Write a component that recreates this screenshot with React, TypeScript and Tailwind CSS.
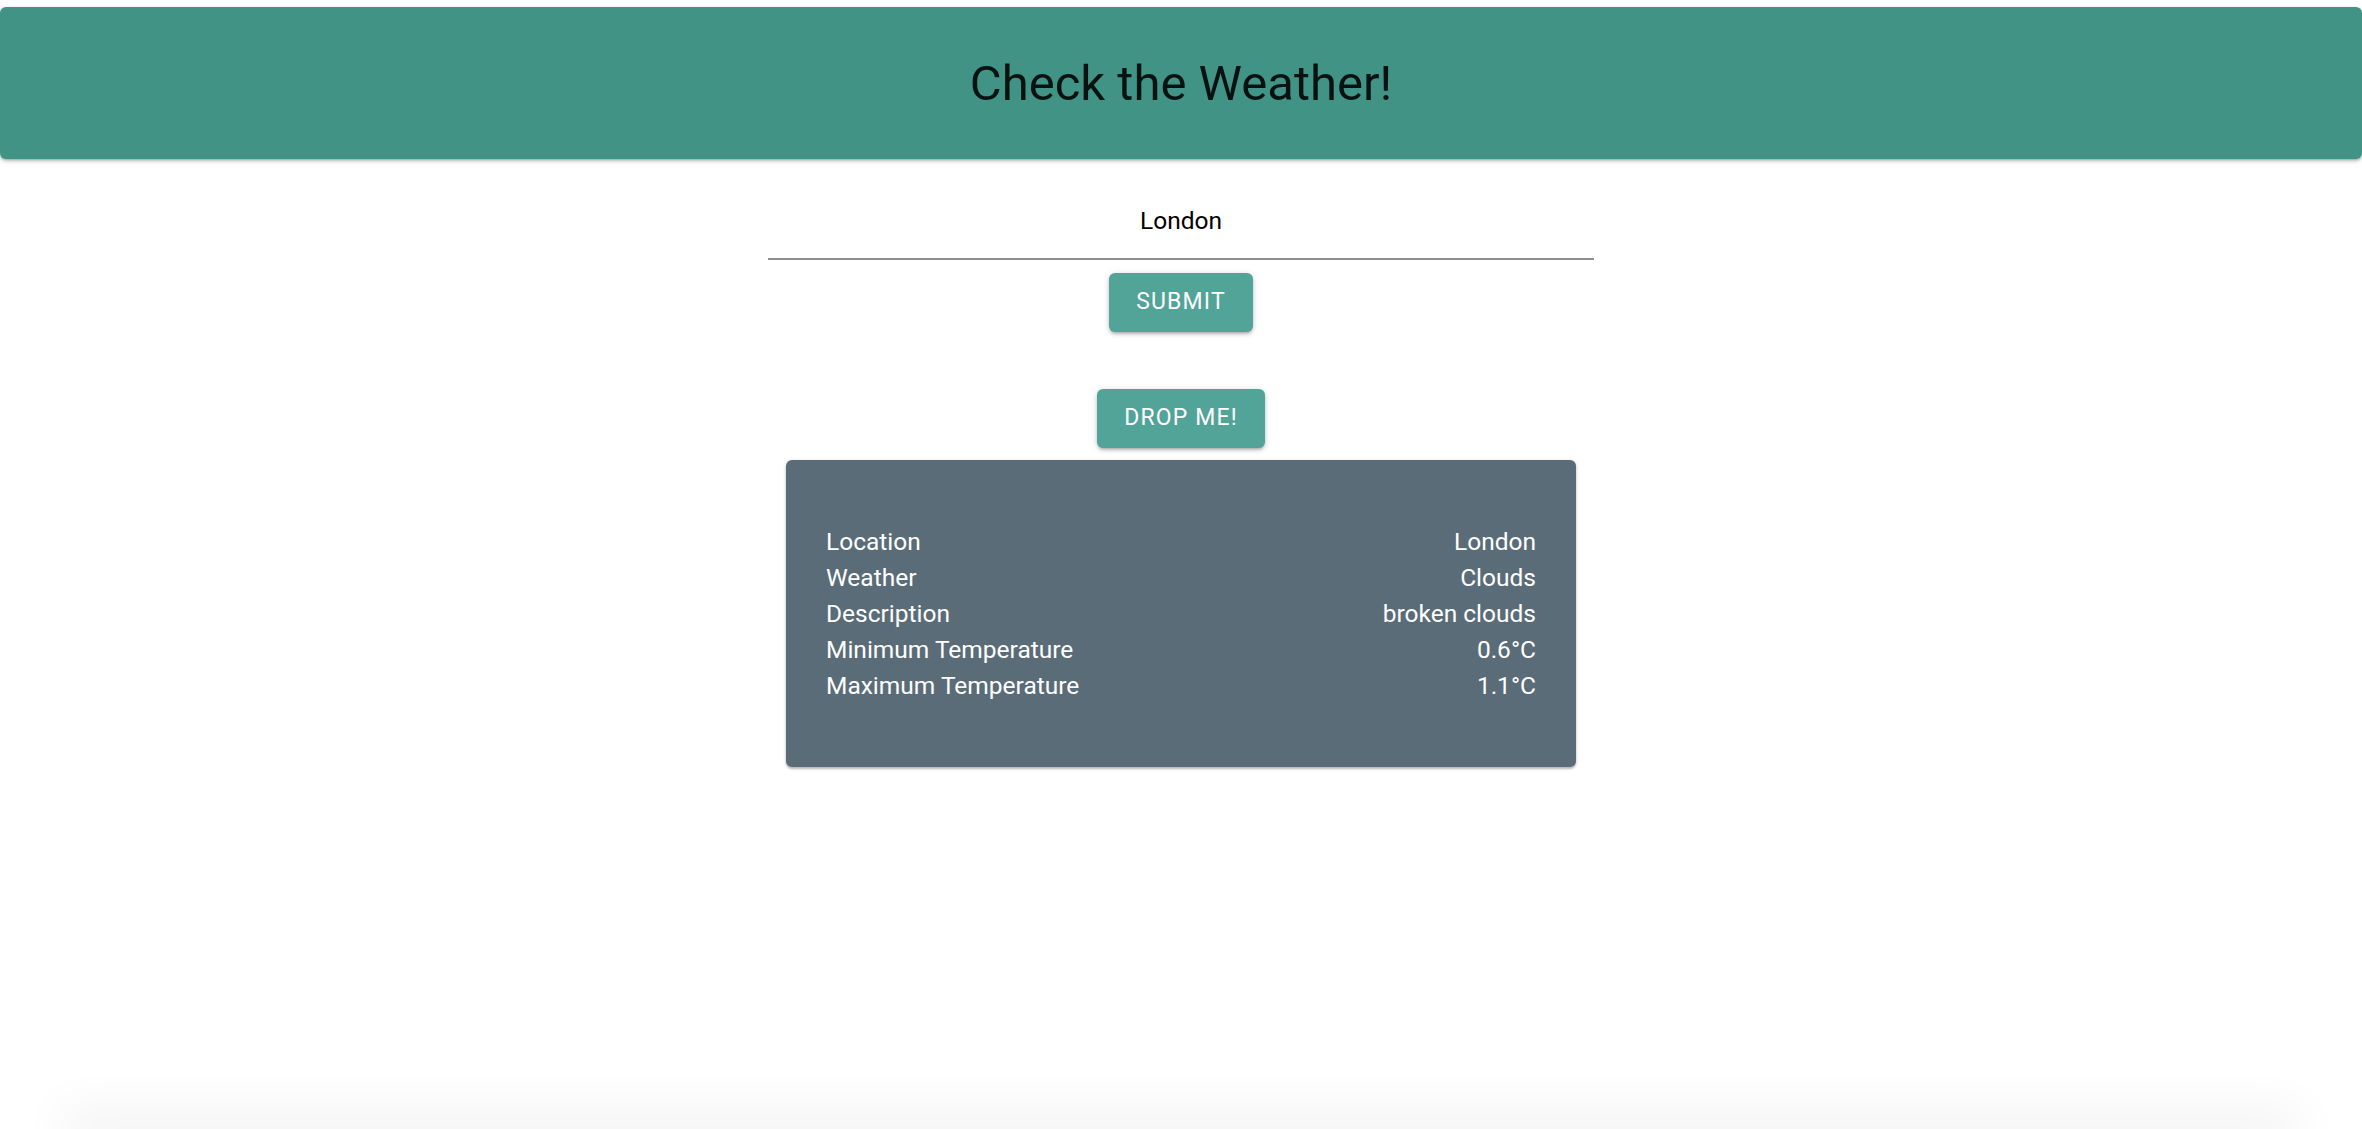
import { useState } from 'react';

const rows = [
  { label: 'Location', value: 'London' },
  { label: 'Weather', value: 'Clouds' },
  { label: 'Description', value: 'broken clouds' },
  { label: 'Minimum Temperature', value: '0.6°C' },
  { label: 'Maximum Temperature', value: '1.1°C' },
];

const App = () => {
  const [city, setCity] = useState('London');

  return (
    <div className="min-h-screen flex flex-col bg-white font-['Roboto',sans-serif] overflow-hidden">
      {/* Barra superior */}
      <header className="mt-[7px] h-[152px] rounded-[6px] bg-[#419386] shadow-[0_2px_4px_rgba(0,0,0,0.25),0_1px_2px_rgba(0,0,0,0.15)] flex items-center justify-center">
        <h1 className="text-[49px] leading-none text-black/[0.87]">Check the Weather!</h1>
      </header>

      {/* Formulario */}
      <div className="mt-[24px] w-[826px] mx-auto border-b-[2px] border-[#8f8f8f]">
        <input
          value={city}
          onChange={(e) => setCity(e.target.value)}
          className="w-full h-[75px] text-center text-[24.5px] text-black bg-transparent outline-none"
        />
      </div>
      <div className="flex justify-center mt-[13px]">
        <button className="h-[59px] px-[27px] rounded-[6px] bg-[#52a398] text-white text-[23px] font-normal tracking-[0.05em] uppercase shadow-[0_3px_3px_-2px_rgba(0,0,0,0.2),0_2px_4px_rgba(0,0,0,0.14),0_1px_7px_rgba(0,0,0,0.12)]">
          Submit
        </button>
      </div>

      <div className="flex justify-center mt-[57px]">
        <button className="h-[59px] px-[27px] rounded-[6px] bg-[#52a398] text-white text-[23px] font-normal tracking-[0.05em] uppercase shadow-[0_3px_3px_-2px_rgba(0,0,0,0.2),0_2px_4px_rgba(0,0,0,0.14),0_1px_7px_rgba(0,0,0,0.12)]">
          Drop me!
        </button>
      </div>

      {/* Tarjeta con los datos */}
      <div className="mt-[12px] mx-auto w-[790px] rounded-[6px] bg-[#5a6c77] px-[40px] pt-[64px] pb-[63px] shadow-[0_2px_2px_rgba(0,0,0,0.2),0_1px_4px_rgba(0,0,0,0.14)]">
        {rows.map((row) => (
          <div key={row.label} className="flex justify-between text-[24.5px] leading-[36px] text-white">
            <span>{row.label}</span>
            <span>{row.value}</span>
          </div>
        ))}
      </div>

      {/* Sombra del pie, fuera de la ventana */}
      <div className="mt-auto mx-[80px] h-0 shadow-[0_0_50px_18px_rgba(0,0,0,0.06)]" />
    </div>
  );
};

export default App;
